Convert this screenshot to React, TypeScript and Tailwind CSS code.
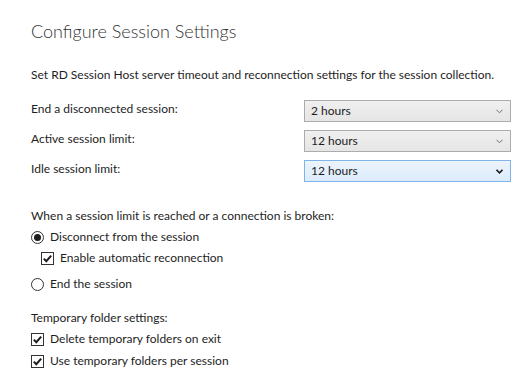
import React from "react";

const font = { fontFamily: 'Lato, "Open Sans", "Noto Sans", sans-serif' };

function Select({ value, focused }: { value: string; focused?: boolean }) {
  return (
    <div
      className={
        "flex h-[22px] w-[207px] items-center justify-between border px-[6px] " +
        (focused
          ? "border-[#7eb4ea] bg-gradient-to-b from-[#ecf4fc] to-[#dcecfc]"
          : "border-[#acacac] bg-gradient-to-b from-[#f0f0f0] to-[#e5e5e5]")
      }
    >
      <span className="text-[12px] text-[#1e1e1e]">{value}</span>
      <svg width="7" height="5" viewBox="0 0 7 5" className="mr-[1px]">
        <path
          d="M0.5 0.8 L3.5 3.8 L6.5 0.8"
          fill="none"
          stroke={focused ? "#1e1e1e" : "#707070"}
          strokeWidth={focused ? 1.6 : 1}
        />
      </svg>
    </div>
  );
}

function Radio({ checked }: { checked?: boolean }) {
  return (
    <span className="flex h-[13px] w-[13px] items-center justify-center rounded-full border border-[#333] bg-white">
      {checked && <span className="h-[7px] w-[7px] rounded-full bg-[#1e1e1e]" />}
    </span>
  );
}

function Check() {
  return (
    <span className="flex h-[13px] w-[13px] items-center justify-center border border-[#333] bg-white">
      <svg width="11" height="11" viewBox="0 0 11 11">
        <path d="M1.8 5.6 L4.3 8.2 L9.2 2.6" fill="none" stroke="#1e1e1e" strokeWidth="2" />
      </svg>
    </span>
  );
}

function Row({ label, value, focused }: { label: string; value: string; focused?: boolean }) {
  return (
    <div className="flex h-[22px] items-center justify-between">
      <span className="-mt-[4px]">{label}</span>
      <Select value={value} focused={focused} />
    </div>
  );
}

export default function App() {
  return (
    <div className="h-[390px] w-[519px] whitespace-nowrap bg-white text-[12px] text-[#1e1e1e]" style={font}>
      <div className="pl-[31px] pr-[8px] pt-[17px]">
        <h1 className="text-[18px] font-light leading-[28px] text-[#333]">Configure Session Settings</h1>
        <p className="mt-[22px] leading-[16px]">
          Set RD Session Host server timeout and reconnection settings for the session collection.
        </p>
        <div className="mt-[17px] flex flex-col gap-[8px]">
          <Row label="End a disconnected session:" value="2 hours" />
          <Row label="Active session limit:" value="12 hours" />
          <Row label="Idle session limit:" value="12 hours" focused />
        </div>
        <p className="mt-[26px] leading-[16px]">When a session limit is reached or a connection is broken:</p>
        <div className="mt-[4px] flex items-center gap-[6px]">
          <Radio checked />
          <span>Disconnect from the session</span>
        </div>
        <div className="mt-[3px] ml-[10px] flex items-center gap-[6px]">
          <Check />
          <span>Enable automatic reconnection</span>
        </div>
        <div className="mt-[8px] flex items-center gap-[6px]">
          <Radio />
          <span>End the session</span>
        </div>
        <p className="mt-[17px] leading-[16px]">Temporary folder settings:</p>
        <div className="mt-[4px] flex items-center gap-[6px]">
          <Check />
          <span>Delete temporary folders on exit</span>
        </div>
        <div className="mt-[4px] flex items-center gap-[6px]">
          <Check />
          <span>Use temporary folders per session</span>
        </div>
      </div>
    </div>
  );
}
